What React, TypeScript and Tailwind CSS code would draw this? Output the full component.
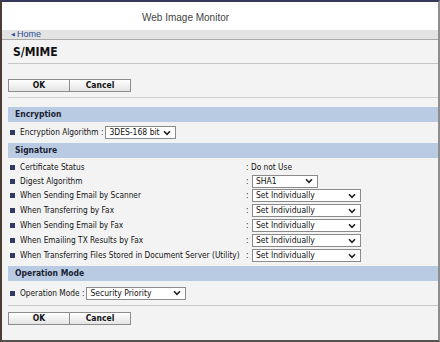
import { ReactNode } from "react";

const font = "font-['DejaVu_Sans_Condensed','DejaVu_Sans',sans-serif]";

const Chevron = () => (
  <svg width="8" height="6" viewBox="0 0 8 6" className="shrink-0">
    <path d="M1 1.2 L4 4.4 L7 1.2" fill="none" stroke="#222" strokeWidth="1.6" />
  </svg>
);

const Select = ({ value, width }: { value: string; width: string }) => (
  <div
    className={`flex items-center justify-between h-[13px] border border-[#8a8a8a] bg-white pl-[3px] pr-[4px] text-[8.5px] text-[#111] ${width}`}
  >
    <span className="leading-none">{value}</span>
    <Chevron />
  </div>
);

const Bullet = () => <span className="w-[5px] h-[5px] bg-[#2f3b66] shrink-0 ml-[2px] mr-[5px]" />;

const SectionHead = ({ children }: { children: ReactNode }) => (
  <div className="h-[15px] bg-[#b9cbe3] flex items-center pl-[7px] text-[8.5px] font-bold text-[#1b1f33]">
    {children}
  </div>
);

const Buttons = () => (
  <div className="flex">
    {["OK", "Cancel"].map((b) => (
      <div
        key={b}
        className="w-[62px] h-[13px] flex items-center justify-center border border-[#8c8c8c] bg-gradient-to-b from-white to-[#e4e4e4] text-[8.5px] font-bold text-[#111] -ml-px first:ml-0"
      >
        {b}
      </div>
    ))}
  </div>
);

const Row = ({ label, children, h = "h-[15px]" }: { label: string; children: ReactNode; h?: string }) => (
  <div className={`flex items-center ${h}`}>
    <Bullet />
    <span className="w-[226px] shrink-0 whitespace-nowrap">{label}</span>
    <span className="w-[5px] shrink-0">:</span>
    {children}
  </div>
);

export default function App() {
  const setRows = [
    "When Sending Email by Scanner",
    "When Transferring by Fax",
    "When Sending Email by Fax",
    "When Emailing TX Results by Fax",
    "When Transferring Files Stored in Document Server (Utility)",
  ];

  return (
    <div
      className={`w-[440px] h-[342px] overflow-hidden flex flex-col border-t-2 border-t-[#363a58] border-l-2 border-l-[#4b3c34] border-r-2 border-r-[#8e8e8e] border-b-2 border-b-[#55524f] bg-[#f3f3f3] ${font}`}
    >
      {/* Header */}
      <div className="h-[28px] bg-white flex items-center pt-[3px] pl-[140px] font-['Liberation_Sans',Arial,sans-serif] text-[10px] text-[#444]">
        Web Image Monitor
      </div>
      <div className="h-[10px] bg-[#e3e3e3] border-b border-[#a9a9a9] flex items-center pl-[9px] font-['Liberation_Sans',Arial,sans-serif] text-[9px] text-[#2c4f97]">
        <span className="text-[5px] mr-[2px]">◀</span>Home
      </div>

      <div className="pl-[6px] flex flex-col text-[8.25px] text-[#141414]">
        <div className="h-[24px] flex items-center pl-[5px] border-b border-[#c6c6c6] text-[12px] font-bold text-[#111]">
          S/MIME
        </div>
        <div className="pt-[15px] pb-[5px] border-b border-[#d2d2d2]">
          <Buttons />
        </div>

        <div className="mt-[9px]">
          <SectionHead>Encryption</SectionHead>
        </div>
        <div className="flex items-center h-[21px]">
          <Bullet />
          <span>Encryption Algorithm :</span>
          <div className="ml-[2px]">
            <Select value="3DES-168 bit" width="w-[71px]" />
          </div>
        </div>

        <SectionHead>Signature</SectionHead>
        <div className="h-[3px]" />
        <Row label="Certificate Status" h="h-[13px]">
          <span>Do not Use</span>
        </Row>
        <Row label="Digest Algorithm" h="h-[14px]">
          <div className="ml-[1px]">
            <Select value="SHA1" width="w-[66px]" />
          </div>
        </Row>
        {setRows.map((r) => (
          <Row key={r} label={r}>
            <div className="ml-[1px]">
              <Select value="Set Individually" width="w-[109px]" />
            </div>
          </Row>
        ))}

        <div className="mt-[3px]">
          <SectionHead>Operation Mode</SectionHead>
        </div>
        <div className="flex items-center h-[25px] border-b border-[#c9c9c9]">
          <Bullet />
          <span>Operation Mode :</span>
          <div className="ml-[2px]">
            <Select value="Security Priority" width="w-[100px]" />
          </div>
        </div>
        <div className="pt-[6px]">
          <Buttons />
        </div>
      </div>
    </div>
  );
}
